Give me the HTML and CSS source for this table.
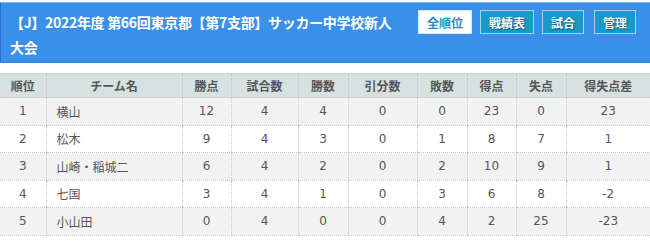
FILE: index.html
```html
<!DOCTYPE html>
<html lang="ja">
<head>
<meta charset="utf-8">
<link rel="stylesheet" href="styles.css">
</head>
<body>
<div class="page">
  <header class="head">
    <h1 class="title">【J】2022年度 第66回東京都【第7支部】サッカー中学校新人大会</h1>
    <nav class="btns">
      <span class="btn active">全順位</span>
      <span class="btn">戦績表</span>
      <span class="btn">試合</span>
      <span class="btn last">管理</span>
    </nav>
  </header>
  <table class="standings">
    <colgroup>
      <col class="c1"><col class="c2"><col class="c3"><col class="c4"><col class="c5">
      <col class="c6"><col class="c7"><col class="c8"><col class="c9"><col class="c10">
    </colgroup>
    <thead>
      <tr><th>順位</th><th>チーム名</th><th>勝点</th><th>試合数</th><th>勝数</th><th>引分数</th><th>敗数</th><th>得点</th><th>失点</th><th>得失点差</th></tr>
    </thead>
    <tbody>
      <tr><td>1</td><td class="team">横山</td><td>12</td><td>4</td><td>4</td><td>0</td><td>0</td><td>23</td><td>0</td><td>23</td></tr>
      <tr><td>2</td><td class="team">松木</td><td>9</td><td>4</td><td>3</td><td>0</td><td>1</td><td>8</td><td>7</td><td>1</td></tr>
      <tr><td>3</td><td class="team">山崎・稲城二</td><td>6</td><td>4</td><td>2</td><td>0</td><td>2</td><td>10</td><td>9</td><td>1</td></tr>
      <tr><td>4</td><td class="team">七国</td><td>3</td><td>4</td><td>1</td><td>0</td><td>3</td><td>6</td><td>8</td><td>-2</td></tr>
      <tr><td>5</td><td class="team">小山田</td><td>0</td><td>4</td><td>0</td><td>0</td><td>4</td><td>2</td><td>25</td><td>-23</td></tr>
    </tbody>
  </table>
</div>
</body>
</html>
```
FILE: styles.css
```css
html, body {
  margin: 0;
  padding: 0;
  background: #fff;
}
body {
  font-family: "DejaVu Sans", "Noto Sans CJK JP", sans-serif;
  color: #555;
}
.page {
  padding-top: 2px;
  width: 650px;
  overflow: hidden;
}
.head {
  display: flex;
  justify-content: space-between;
  align-items: flex-start;
  background: #3a8fe8;
  border-top: 1px solid #7db6f0;
  border-left: 1px solid #2a70c8;
  border-bottom: 1px solid #2f84dc;
  box-sizing: border-box;
  height: 61px;
  padding: 7px 14px 0 9px;
}
.title {
  margin: 0;
  width: 385px;
  flex: 0 0 385px;
  font-family: "Noto Sans CJK JP", sans-serif;
  font-size: 14px;
  line-height: 25px;
  font-weight: 700;
  color: #fff;
  letter-spacing: -0.3px;
}
.btns {
  display: flex;
  flex: 0 0 auto;
  gap: 8px;
  margin-top: 0;
}
.btn {
  display: inline-flex;
  align-items: center;
  justify-content: center;
  white-space: nowrap;
  height: 24px;
  box-sizing: border-box;
  padding: 0 8px;
  background: #179ac6;
  border: 1px solid #a9d4ee;
  color: #fff;
  font-family: "Noto Sans CJK JP", sans-serif;
  font-size: 12px;
  font-weight: 700;
  text-shadow: 1px 1px 1px rgba(0,0,0,0.45);
}
.btn.last {
  margin-left: 2px;
}
.btn.active {
  background: #fff;
  border-color: #d8e8f4;
  color: #1b8fc6;
  text-shadow: none;
}
.standings {
  margin-top: 10px;
  width: 650px;
  border-collapse: collapse;
  table-layout: fixed;
  font-size: 12px;
}
.c1 { width: 46px; }
.c2 { width: 136px; }
.c3 { width: 49px; }
.c4 { width: 67px; }
.c5 { width: 50px; }
.c6 { width: 69px; }
.c7 { width: 50px; }
.c8 { width: 49px; }
.c9 { width: 50px; }
.c10 { width: 84px; }
.standings th {
  background: #d6e1e1;
  border-top: 1px solid #c9d3d3;
  border-left: 1px dotted #b8c4c4;
  height: 23px;
  padding: 0;
  font-family: "Noto Sans CJK JP", sans-serif;
  font-weight: 700;
  font-size: 12px;
  color: #555;
  text-align: center;
}
.standings td {
  height: 26.5px;
  padding: 0;
  text-align: center;
  border-left: 1px dotted #c8c8c8;
  border-top: 1px dotted #c8c8c8;
  border-bottom: 1px dotted #c8c8c8;
  color: #555;
}
.standings th:first-child,
.standings td:first-child {
  border-left: none;
}
.standings tbody tr:nth-child(odd) td {
  background: #f2f2f2;
}
.standings tbody tr:nth-child(even) td {
  background: #fff;
}
.standings td.team {
  text-align: left;
  padding-left: 10px;
  font-family: "Noto Sans CJK JP", sans-serif;
}
```
